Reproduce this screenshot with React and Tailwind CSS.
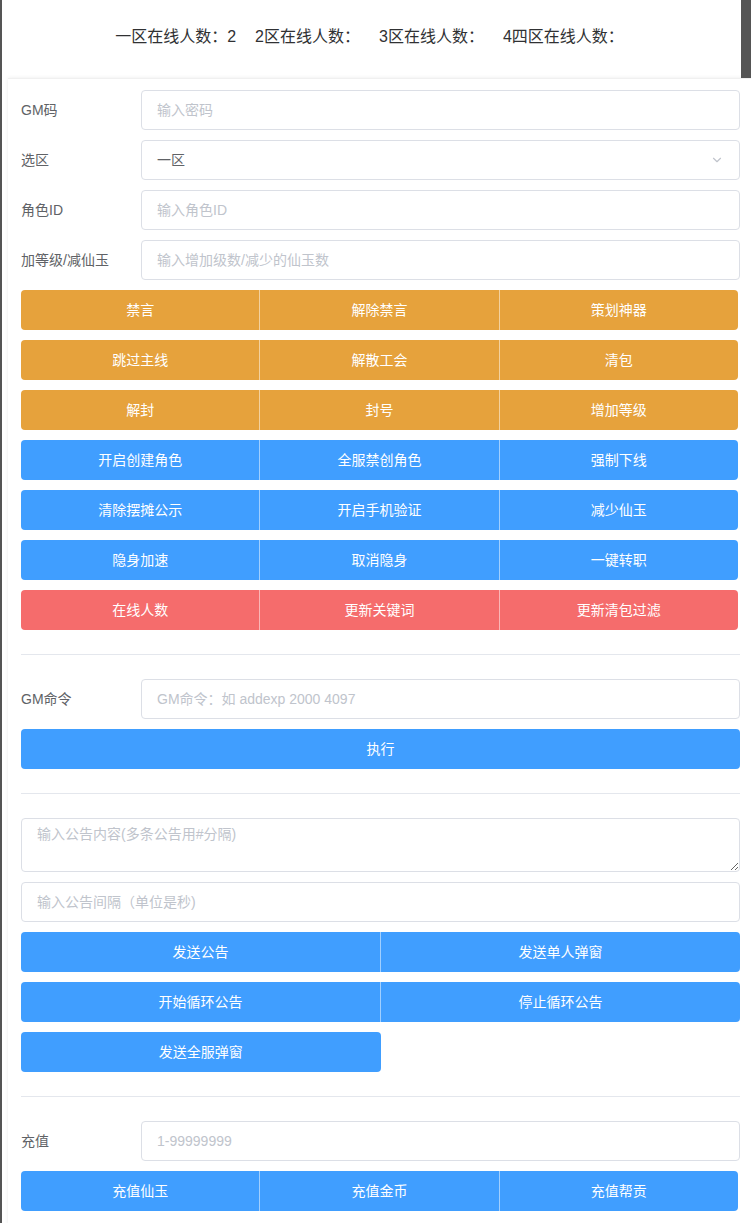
import { ChevronDown } from 'lucide-react';

const font = { fontFamily: '"Liberation Sans", "Noto Sans CJK SC", sans-serif' };

const colors = {
  orange: 'bg-[#e6a23c]',
  blue: 'bg-[#409eff]',
  red: 'bg-[#f56c6c]',
};

const ButtonGroup = ({ items, color, className = '' }) => (
  <div className={`flex h-10 ${className}`}>
    {items.map((t, i) => (
      <button
        key={t}
        className={`flex-1 text-sm text-white ${colors[color]} ${i === 0 ? 'rounded-l' : 'border-l border-white/50'} ${i === items.length - 1 ? 'rounded-r' : ''}`}
      >
        {t}
      </button>
    ))}
  </div>
);

const FormRow = ({ label, placeholder, children }) => (
  <div className="flex items-center h-10">
    <label className="w-[120px] shrink-0 text-sm text-[#606266]">{label}</label>
    {children || (
      <input
        className="flex-1 h-10 rounded border border-[#dcdfe6] px-[15px] text-sm text-[#606266] placeholder:text-[#c0c4cc] outline-none"
        placeholder={placeholder}
      />
    )}
  </div>
);

const Divider = () => <div className="h-px bg-[#e4e7ed] my-6" />;

export default function App() {
  return (
    <div className="min-h-screen bg-white border-l-2 border-[#555]" style={font}>
      <div className="flex h-[78px]">
        <div className="flex-1 flex items-center justify-center text-base text-[#303133] gap-[19px] pb-[4px] pr-[4px]">
          <span>一区在线人数：2</span>
          <span>2区在线人数：</span>
          <span>3区在线人数：</span>
          <span>4四区在线人数：</span>
        </div>
        <div className="w-[10px] bg-[#555]" />
      </div>
      <div className="ml-[6px] pl-[13px] pr-[11px] pt-[11px] pb-4 shadow-[0_0_4px_rgba(0,0,0,0.08)] border-t border-[#f0f0f0]">
        <div className="flex flex-col gap-[10px]">
          <FormRow label="GM码" placeholder="输入密码" />
          <FormRow label="选区">
            <div className="flex-1 h-10 rounded border border-[#dcdfe6] px-[15px] flex items-center justify-between text-sm text-[#606266]">
              <span>一区</span>
              <ChevronDown size={14} className="text-[#c0c4cc]" />
            </div>
          </FormRow>
          <FormRow label="角色ID" placeholder="输入角色ID" />
          <FormRow label="加等级/减仙玉" placeholder="输入增加级数/减少的仙玉数" />
          <ButtonGroup color="orange" items={['禁言', '解除禁言', '策划神器']} className="mr-[2px]" />
          <ButtonGroup color="orange" items={['跳过主线', '解散工会', '清包']} className="mr-[2px]" />
          <ButtonGroup color="orange" items={['解封', '封号', '增加等级']} className="mr-[2px]" />
          <ButtonGroup color="blue" items={['开启创建角色', '全服禁创角色', '强制下线']} className="mr-[2px]" />
          <ButtonGroup color="blue" items={['清除摆摊公示', '开启手机验证', '减少仙玉']} className="mr-[2px]" />
          <ButtonGroup color="blue" items={['隐身加速', '取消隐身', '一键转职']} className="mr-[2px]" />
          <ButtonGroup color="red" items={['在线人数', '更新关键词', '更新清包过滤']} className="mr-[2px]" />
        </div>
        <Divider />
        <div className="flex flex-col gap-[10px]">
          <FormRow label="GM命令" placeholder="GM命令：如 addexp 2000 4097" />
          <ButtonGroup color="blue" items={['执行']} />
        </div>
        <Divider />
        <div className="flex flex-col gap-[10px]">
          <textarea
            className="h-[54px] rounded border border-[#dcdfe6] px-[15px] py-[5px] text-sm placeholder:text-[#c0c4cc] outline-none"
            placeholder="输入公告内容(多条公告用#分隔)"
          />
          <input
            className="h-10 rounded border border-[#dcdfe6] px-[15px] text-sm placeholder:text-[#c0c4cc] outline-none"
            placeholder="输入公告间隔（单位是秒)"
          />
          <ButtonGroup color="blue" items={['发送公告', '发送单人弹窗']} />
          <ButtonGroup color="blue" items={['开始循环公告', '停止循环公告']} />
          <div className="flex">
            <button className="w-1/2 h-10 rounded bg-[#409eff] text-sm text-white">发送全服弹窗</button>
          </div>
        </div>
        <Divider />
        <div className="flex flex-col gap-[10px]">
          <FormRow label="充值" placeholder="1-99999999" />
          <ButtonGroup color="blue" items={['充值仙玉', '充值金币', '充值帮贡']} className="mr-[2px]" />
        </div>
      </div>
    </div>
  );
}
